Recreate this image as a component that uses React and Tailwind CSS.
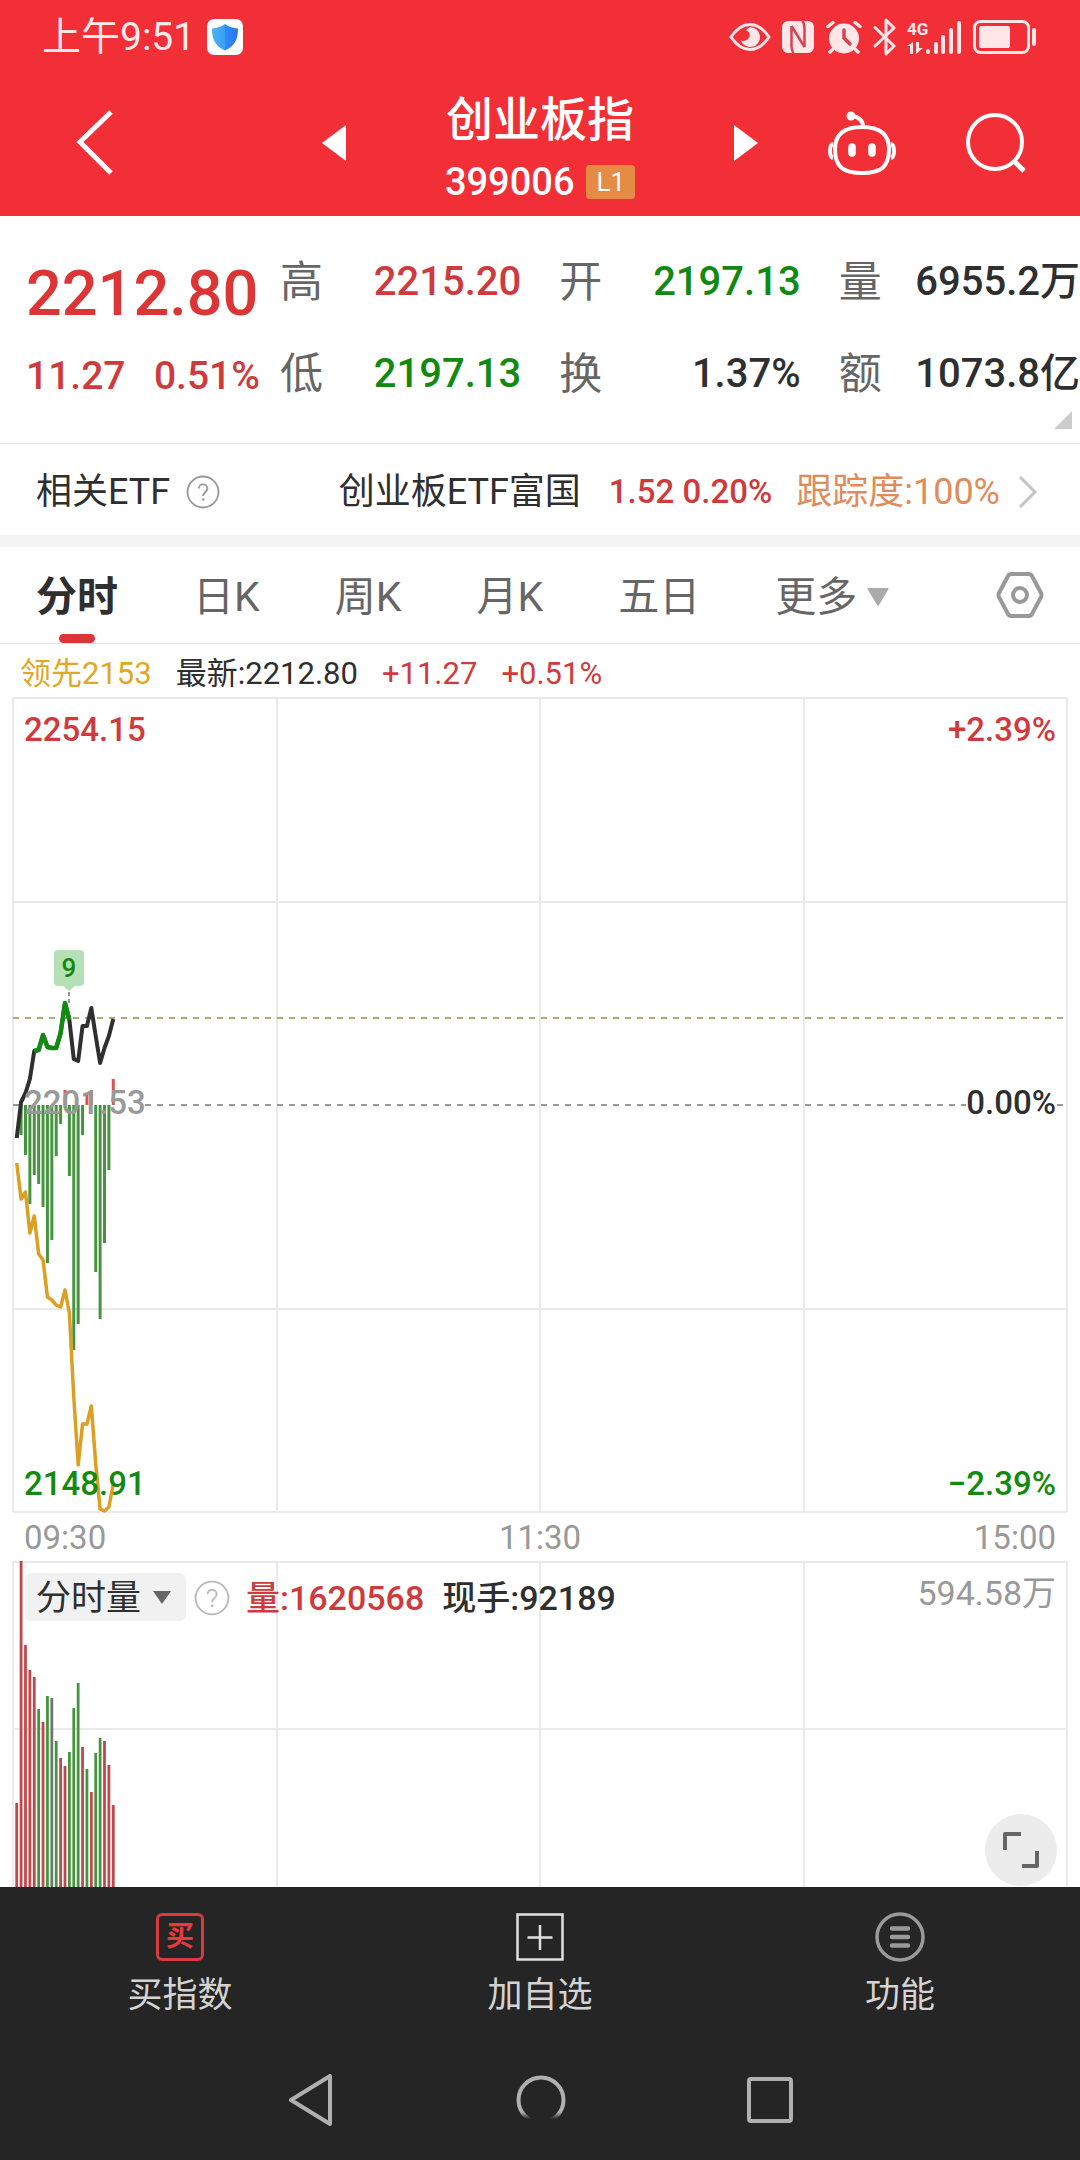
import React, { useState } from 'react';

const STEP = 4.39;
const FIRST_X = 3.7;
const ZERO_Y = 407;

// Valores por minuto desde las 09:30, en pixeles del grafico
const price = [440, 404, 395, 381, 353, 352, 337, 349, 350, 350, 335, 305, 322, 361, 363, 328, 328, 310, 338, 365, 350, 338, 321];
const leading = [465, 501, 494, 535, 518, 556, 562, 599, 602, 607, 609, 592, 615, 699, 767, 726, 726, 708, 766, 811, 813, 809, 786];
const force = [null, 437, 457, 506, 477, 486, 509, 565, 542, 458, 426, 392, 478, 652, 626, 437, 396, 392, 574, 621, 545, 472, 381];

const volume = [
    [242, 'r'], [0, 'r'], [84, 'r'], [109, 'r'], [116, 'r'], [148, 'g'], [161, 'r'], [135, 'g'],
    [137, 'n'], [180, 'g'], [197, 'r'], [205, 'r'], [191, 'g'], [147, 'g'], [122, 'g'], [186, 'r'],
    [208, 'g'], [231, 'r'], [192, 'g'], [177, 'g'], [180, 'r'], [204, 'r'], [244, 'r'],
];
const barColors = { r: '#c0484a', g: '#479440', n: '#667a6c' };

const tabs = ['分时', '日K', '周K', '月K', '五日'];

const xAt = (i) => FIRST_X + i * STEP;
const toPoints = (values, offset = 0) => values.map((y, i) => `${xAt(i + offset)},${y}`).join(' ');

const StatusIcons = () => (
    <div className="flex items-center gap-[10px] text-[#ffe6e8]">
        <svg width="42" height="34" viewBox="0 0 42 34" fill="none" stroke="currentColor" strokeWidth="3">
            <path d="M2 17C8 8 14 4.500 21 4.500S34 8 40 17C34 26 28 29.500 21 29.500S8 26 2 17Z" />
            <path d="M21 7a10 10 0 1 1-9.500 13c3 2 8 .5 9-3.500 .8-3-1-5.500-3.500-6A9 9 0 0 1 21 7Z" fill="currentColor" stroke="none" />
        </svg>
        <svg width="34" height="34" viewBox="0 0 34 34" fill="currentColor">
            <rect x="1" y="1" width="32" height="32" rx="6" />
            <path d="M10.500 6v20c0 3 .5 5 2 7M23.500 27V8c0-3-.5-5-2-7M10.500 6 23.500 27" fill="none" stroke="#d9434d" strokeWidth="2.500" />
        </svg>
        <svg width="38" height="34" viewBox="0 0 38 34" fill="none" stroke="currentColor" strokeWidth="3.500" strokeLinecap="round">
            <circle cx="19" cy="18.500" r="15" fill="currentColor" stroke="none" />
            <path d="M3 6.500 8 2.500M35 6.500 30 2.500M7.500 29.500 5 32M30.500 29.500 33 32" />
            <path d="M19 10v8l6 6" stroke="#d9434d" />
        </svg>
        <svg width="24" height="38" viewBox="0 0 24 38" fill="none" stroke="currentColor" strokeWidth="3" strokeLinecap="round" strokeLinejoin="round">
            <path d="M2 9.500 21 28 13 36V2l8 8L2 28" />
        </svg>
        <svg width="56" height="36" viewBox="0 0 56 36" fill="currentColor">
            <text x="0" y="16" fontSize="17" fontWeight="700" fontFamily="Roboto, sans-serif">4G</text>
            <path d="M0 27 6 23v12H3v-8H0ZM9 23h3v6h4l-7 6Z" />
            <rect x="19" y="30" width="4" height="5" rx="2" />
            <rect x="27" y="23" width="4" height="12" rx="2" />
            <rect x="34" y="16" width="4" height="19" rx="2" />
            <rect x="42" y="9" width="4" height="26" rx="2" />
            <rect x="50" y="2" width="4" height="33" rx="2" />
        </svg>
        <svg width="64" height="34" viewBox="0 0 64 34" fill="currentColor">
            <rect x="1.500" y="1.500" width="54" height="31" rx="6" fill="none" stroke="currentColor" strokeWidth="3" />
            <rect x="6" y="6" width="31" height="22" rx="2" />
            <rect x="59" y="8" width="4" height="18" rx="2" />
        </svg>
    </div>
);

const Header = () => (
    <header className="bg-[#f22f37] text-white">
        <div className="flex h-[74px] items-center justify-between pr-[43px] pl-[42px]">
            <div className="flex items-center gap-3 text-[39px] leading-[44px] text-[#ffe9eb]">
                <span>上午9:51</span>
                <svg width="36" height="36" viewBox="0 0 36 36">
                    <defs>
                        <linearGradient id="shield" x1="0" x2="1">
                            <stop offset="0" stopColor="#45b4f5" />
                            <stop offset="0.5" stopColor="#3d9df6" />
                            <stop offset="0.5" stopColor="#2f8cf5" />
                            <stop offset="1" stopColor="#2a78f0" />
                        </linearGradient>
                    </defs>
                    <rect width="36" height="36" rx="7" fill="#fff" />
                    <path d="M18 5c4 3 8 4 13 4.500C31 20 28 27 18 31.500 8 27 5 20 5 9.500 10 9 14 8 18 5Z" fill="url(#shield)" />
                </svg>
            </div>
            <StatusIcons />
        </div>

        <div className="grid grid-cols-[1fr_auto_1fr]">
            <div className="flex items-center justify-between pr-[99px] pb-1 pl-[76px]">
                <button type="button" aria-label="返回">
                    <svg width="38" height="66" viewBox="0 0 38 66" fill="none" stroke="currentColor" strokeWidth="5">
                        <path d="M35 2 4 32l31 31" />
                    </svg>
                </button>
                <button type="button" aria-label="上一个">
                    <svg width="24" height="36" viewBox="0 0 24 36" fill="currentColor"><path d="M24 0v36L0 18Z" /></svg>
                </button>
            </div>
            <div className="pt-[14px] pb-1 text-center">
                <h1 className="text-[47px] leading-[64px] font-medium">创业板指</h1>
                <div className="flex h-[60px] items-center justify-center gap-3">
                    <span className="text-[38px] leading-[44px] font-medium">399006</span>
                    <span className="rounded-sm bg-[#e58b45] px-[10px] text-[26px] leading-[34px]">L1</span>
                </div>
            </div>
            <div className="flex items-center justify-between pr-[54px] pb-1 pl-[99px]">
                <button type="button" aria-label="下一个">
                    <svg width="24" height="36" viewBox="0 0 24 36" fill="currentColor"><path d="M0 0v36l24-18Z" /></svg>
                </button>
                <button type="button" aria-label="助手">
                    <svg width="70" height="66" viewBox="0 0 70 66" fill="none" stroke="currentColor" strokeWidth="4">
                        <path d="M35 17C50 17 62 22 62 39c0 18-8 24-27 24S8 57 8 39c0-17 12-22 27-22Z" />
                        <path d="M36 17C36 10 32 7 25 6" />
                        <circle cx="24" cy="6" r="4.500" fill="currentColor" stroke="none" />
                        <path d="M6 34C2 35 2 47 6 48M64 34c4 1 4 13 0 14" strokeWidth="4" />
                        <path d="M25 37v6M45 37v6" strokeWidth="7.500" strokeLinecap="round" />
                    </svg>
                </button>
                <button type="button" aria-label="搜索">
                    <svg width="60" height="62" viewBox="0 0 60 62" fill="none" stroke="currentColor" strokeWidth="4">
                        <circle cx="29" cy="30" r="27" />
                        <path d="m48 49 10 10" strokeWidth="5" />
                    </svg>
                </button>
            </div>
        </div>
    </header>
);

const quoteGroups = [
    [
        { label: '高', value: '2215.20', color: 'text-[#cf3b3d]' },
        { label: '低', value: '2197.13', color: 'text-[#128a12]' },
    ],
    [
        { label: '开', value: '2197.13', color: 'text-[#128a12]' },
        { label: '换', value: '1.37%', color: 'text-[#2f2f2f]' },
    ],
    [
        { label: '量', value: '6955.2万', color: 'text-[#2f2f2f]' },
        { label: '额', value: '1073.8亿', color: 'text-[#2f2f2f]' },
    ],
];

const Quote = () => (
    <section className="relative flex border-b border-[#e4e4e4] pt-5 pb-[23px]">
        <div className="w-[280px] shrink-0 pt-5 pl-[26px] font-medium">
            <div className="text-[63px] leading-[76px] text-[#dc3535]">2212.80</div>
            <div className="flex justify-between pr-5 text-[39px] leading-[88px] text-[#cf3b3d]">
                <span>11.27</span>
                <span>0.51%</span>
            </div>
        </div>
        <div className="flex flex-1 gap-[38px]">
            {quoteGroups.map((group) => (
                <dl key={group[0].label} className="flex-1">
                    {group.map((item) => (
                        <div key={item.label} className="flex h-[92px] items-center justify-between">
                            <dt className="text-[43px] leading-[48px] text-[#666]">{item.label}</dt>
                            <dd className={`text-[40px] leading-[48px] font-medium whitespace-nowrap ${item.color}`}>{item.value}</dd>
                        </div>
                    ))}
                </dl>
            ))}
        </div>
        <svg className="absolute right-2 bottom-[14px]" width="18" height="18" viewBox="0 0 18 18" fill="#ccc">
            <path d="M18 0v18H0Z" />
        </svg>
    </section>
);

const HelpIcon = ({ size, color }) => (
    <svg width={size} height={size} viewBox="0 0 34 34" fill="none" stroke={color} strokeWidth="1.800">
        <circle cx="17" cy="17" r="15.500" />
        <path d="M12.800 13.500c0-5.500 8.600-5.500 8.600 0 0 3.500-4.200 3.500-4.200 7.500" />
        <circle cx="17.200" cy="24.500" r="1.300" fill={color} stroke="none" />
    </svg>
);

const EtfRow = () => (
    <section className="flex h-[91px] items-center pt-1 pr-[42px] pl-9 text-[36px] leading-[44px] whitespace-nowrap text-[#2f2f2f]">
        <span>相关ETF</span>
        <button type="button" aria-label="相关ETF说明" className="ml-4">
            <HelpIcon size={34} color="#999" />
        </button>
        <a href="#etf" className="flex flex-1 items-center justify-end">
            <span>创业板ETF富国</span>
            <span className="ml-7 text-[33px] font-medium text-[#cf3b3d]">1.52 0.20%</span>
            <span className="ml-6 text-[#e08c5a]">跟踪度:100%</span>
            <svg className="ml-[18px]" width="20" height="34" viewBox="0 0 20 34" fill="none" stroke="#c4c4c4" strokeWidth="3">
                <path d="m2 2 15 15L2 32" />
            </svg>
        </a>
    </section>
);

const Tabs = () => {
    const [active, setActive] = useState('分时');

    return (
        <nav className="flex h-[97px] items-center border-b border-[#e4e4e4] pr-9 pl-9 text-[41px] leading-[48px] text-[#666]">
            <div className="flex h-full flex-1 gap-[75px]">
                {tabs.map((tab) => (
                    <button
                        key={tab}
                        type="button"
                        onClick={() => setActive(tab)}
                        className={`relative pt-1 whitespace-nowrap ${tab === active ? 'font-bold text-[#2f2f2f]' : ''}`}
                    >
                        {tab}
                        {tab === active && (
                            <span className="absolute bottom-0 left-1/2 h-[9px] w-9 -translate-x-1/2 rounded-full bg-[#df3336]"></span>
                        )}
                    </button>
                ))}
                <button type="button" aria-haspopup="menu" className="flex items-center gap-[10px] pt-1 whitespace-nowrap">
                    更多
                    <svg width="22" height="18" viewBox="0 0 22 18" fill="#aaa"><path d="M1 0h20q1 0 .5 1L12 17q-1 1-2 0L.5 1Q0 0 1 0Z" /></svg>
                </button>
            </div>
            <button type="button" aria-label="设置">
                <svg width="48" height="46" viewBox="0 0 48 46" fill="none" stroke="#999" strokeWidth="4" strokeLinejoin="round">
                    <path d="M15 2h18q2 0 3 2l9 17q1 2 0 4l-9 17q-1 2-3 2H15q-2 0-3-2L3 25q-1-2 0-4l9-17q1-2 3-2Z" />
                    <circle cx="24" cy="23" r="7" />
                </svg>
            </button>
        </nav>
    );
};

const PriceChart = () => (
    <div className="relative mx-[13px] h-[814px] text-[33px] leading-10 font-medium">
        <svg className="block h-full w-full overflow-visible" fill="none">
            <g stroke="#eaeaea" strokeWidth="2" shapeRendering="crispEdges">
                {['0%', '25%', '50%', '75%', '100%'].map((x) => (
                    <line key={x} x1={x} x2={x} y1="0" y2="100%" />
                ))}
                {['0%', '25%', '75%', '100%'].map((y) => (
                    <line key={y} x1="0" x2="100%" y1={y} y2={y} />
                ))}
            </g>
            <g strokeWidth="2" strokeDasharray="6 6">
                <line x1="0" x2="100%" y1="320" y2="320" stroke="#b3a878" />
                <line x1="0" x2="6" y1={ZERO_Y} y2={ZERO_Y} stroke="#999" />
                <line x1="132" x2="100%" y1={ZERO_Y} y2={ZERO_Y} stroke="#999" />
            </g>
            {/* Barras de fuerza: verde hacia abajo, rojo hacia arriba */}
            {force.map((y, i) => y !== null && (
                <line key={i} x1={xAt(i)} x2={xAt(i)} y1={ZERO_Y} y2={y} stroke={y > ZERO_Y ? '#479440' : '#d65557'} strokeWidth="3" />
            ))}
            <polyline points={toPoints(leading)} stroke="#dc9f22" strokeWidth="3.500" strokeLinejoin="round" />
            <polyline points={toPoints(price)} stroke="#2f2f2f" strokeWidth="4" strokeLinejoin="round" />
            <polyline points={toPoints(price.slice(4, 13), 4)} stroke="#128a12" strokeWidth="4.500" strokeLinejoin="round" />
            <path d="M56 294v14" stroke="#2f2f2f" strokeDasharray="4 3" />
            <path d="M45 252h22a4 4 0 0 1 4 4v28a4 4 0 0 1-4 4h-5l-6 5-6-5h-5a4 4 0 0 1-4-4v-28a4 4 0 0 1 4-4Z" fill="#b5e0b5" />
        </svg>
        <span className="absolute top-[252px] left-[41px] w-[30px] text-center text-[26px] leading-9 text-[#128a12]">9</span>
        <span className="absolute top-3 left-[11px] text-[#cf3b3d]">2254.15</span>
        <span className="absolute top-3 right-[11px] text-[#cf3b3d]">+2.39%</span>
        <span className="absolute top-[385px] left-[11px] text-[#999]">2201.53</span>
        <span className="absolute top-[385px] right-[11px] bg-white text-[#2f2f2f]">0.00%</span>
        <span className="absolute bottom-2 left-[11px] text-[#128a12]">2148.91</span>
        <span className="absolute right-[11px] bottom-2 text-[#128a12]">−2.39%</span>
    </div>
);

const VolumeChart = () => (
    <div className="relative mx-[13px] min-h-[326px] flex-1">
        <svg className="absolute inset-0 h-full w-full overflow-visible">
            <g stroke="#eaeaea" strokeWidth="2" shapeRendering="crispEdges">
                {['0%', '25%', '50%', '75%', '100%'].map((x) => (
                    <line key={x} x1={x} x2={x} y1="0" y2="100%" />
                ))}
                <line x1="0" x2="100%" y1="1" y2="1" />
                <line x1="0" x2="100%" y1="168" y2="168" />
            </g>
            {volume.map(([y, kind], i) => (
                <line key={i} x1={xAt(i)} x2={xAt(i)} y1={y} y2="326" stroke={barColors[kind]} strokeWidth="2.800" />
            ))}
        </svg>
        <div className="relative flex items-start justify-between pt-3 pr-[11px] pl-3 text-[34px] leading-[48px] font-medium">
            <div className="flex items-center">
                <div className="relative">
                    <select
                        aria-label="指标"
                        className="h-12 w-[161px] appearance-none rounded-md bg-[#f1f1f1] pt-1 pl-[11px] text-[35px] leading-[44px] font-normal text-[#2f2f2f]"
                    >
                        <option>分时量</option>
                    </select>
                    <svg className="pointer-events-none absolute top-[18px] right-[15px]" width="18" height="13" viewBox="0 0 18 13" fill="#666">
                        <path d="M0 0h18L9 13Z" />
                    </svg>
                </div>
                <button type="button" aria-label="分时量说明" className="ml-2">
                    <HelpIcon size={36} color="#bbb" />
                </button>
                <span className="ml-4 text-[#cf3b3d]">量:1620568</span>
                <span className="ml-[18px] text-[#2f2f2f]">现手:92189</span>
            </div>
            <span className="text-[34px] leading-10 font-normal text-[#999]">594.58万</span>
        </div>
        <button type="button" aria-label="全屏" className="absolute right-[10px] bottom-[1px] flex size-[72px] items-center justify-center rounded-full bg-[#ececec]">
            <svg width="38" height="38" viewBox="0 0 38 38" fill="none" stroke="#666" strokeWidth="4" strokeLinejoin="round">
                <path d="M3 19V3h16M35 20v15H20" />
            </svg>
        </button>
    </div>
);

const actions = [
    {
        label: '买指数',
        icon: (
            <span className="flex size-12 items-center justify-center rounded-md border-3 border-[#d93a3d] text-[28px] leading-none font-bold text-[#e83a3d]">买</span>
        ),
    },
    {
        label: '加自选',
        icon: (
            <svg width="48" height="48" viewBox="0 0 48 48" fill="none" stroke="#e0e0e0" strokeWidth="2.500">
                <path d="M1.500 1.500h45v45h-45ZM24 12v25M11.500 24.500h25" />
            </svg>
        ),
    },
    {
        label: '功能',
        icon: (
            <svg width="50" height="50" viewBox="0 0 50 50" fill="none" stroke="#999" strokeWidth="3.500">
                <circle cx="25" cy="25" r="23" />
                <path d="M17 16.500h16M17 25h16M17 33.500h16" strokeWidth="4.500" strokeLinecap="round" />
            </svg>
        ),
    },
];

const Footer = () => (
    <footer className="bg-[#252525]">
        <div className="grid h-[153px] grid-cols-3 pt-[26px]">
            {actions.map((action) => (
                <button key={action.label} type="button" className="flex flex-col items-center gap-[10px] text-[35px] leading-[50px] text-[#d4d4d4]">
                    <span className="flex h-12 items-center">{action.icon}</span>
                    {action.label}
                </button>
            ))}
        </div>
        <div className="flex h-[120px] items-center justify-center gap-[181px]">
            <button type="button" aria-label="系统返回">
                <svg width="48" height="52" viewBox="0 0 48 52" fill="none" stroke="#b0b0b0" strokeWidth="4" strokeLinejoin="round">
                    <path d="M43 2v48L4 26Z" />
                </svg>
            </button>
            <button type="button" aria-label="主屏幕">
                <svg width="50" height="50" viewBox="0 0 50 50" fill="none" strokeWidth="4">
                    <defs>
                        <linearGradient id="home" x1="0" y1="0" x2="0" y2="50" gradientUnits="userSpaceOnUse">
                            <stop offset="0.74" stopColor="#b0b0b0" />
                            <stop offset="0.88" stopColor="#252525" />
                        </linearGradient>
                    </defs>
                    <circle cx="25" cy="25" r="22.500" stroke="url(#home)" />
                </svg>
            </button>
            <button type="button" aria-label="最近任务">
                <svg width="46" height="46" viewBox="0 0 46 46" fill="none" stroke="#b0b0b0" strokeWidth="4">
                    <rect x="2" y="2" width="42" height="42" rx="2" />
                </svg>
            </button>
        </div>
    </footer>
);

const App = () => (
    <div className="flex min-h-screen flex-col bg-white font-['Roboto','Noto_Sans_CJK_SC',sans-serif]">
        <Header />
        <Quote />
        <EtfRow />
        <div className="h-3 bg-[#f4f4f4]"></div>
        <Tabs />
        <div className="flex h-[54px] items-center gap-6 pt-[6px] pl-5 text-[31px] leading-10 whitespace-nowrap">
            <span className="text-[#dfa826]">领先2153</span>
            <span className="text-[#2f2f2f]">最新:2212.80</span>
            <span className="text-[#cf3b3d]">+11.27</span>
            <span className="text-[#cf3b3d]">+0.51%</span>
        </div>
        <PriceChart />
        <div className="flex h-[49px] items-center justify-between px-6 pt-[2px] text-[33px] leading-10 text-[#999]">
            <span>09:30</span>
            <span>11:30</span>
            <span>15:00</span>
        </div>
        <VolumeChart />
        <Footer />
    </div>
);

export default App;
